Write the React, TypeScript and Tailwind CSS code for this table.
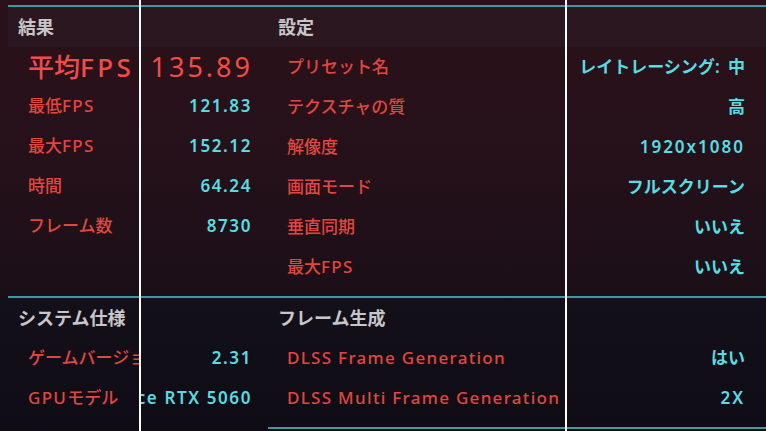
const results = [
  ["最低FPS", "121.83"],
  ["最大FPS", "152.12"],
  ["時間", "64.24"],
  ["フレーム数", "8730"],
];

const settings = [
  ["プリセット名", "レイトレーシング: 中"],
  ["テクスチャの質", "高"],
  ["解像度", "1920x1080"],
  ["画面モード", "フルスクリーン"],
  ["垂直同期", "いいえ"],
  ["最大FPS", "いいえ"],
];

const system = [
  ["ゲームバージョン", "2.31"],
  ["GPUモデル", "GeForce RTX 5060"],
  ["GPUメモリ", "8151 MB"],
];

const frameGen = [
  ["DLSS Frame Generation", "はい"],
  ["DLSS Multi Frame Generation", "2X"],
];

// latin runs in the game font are spaced wider than the kana
const Txt = ({ s, wide }: { s: string; wide?: boolean }) => (
  <>
    {s.split(/([\x20-\x7e]+)/).map((p, i) =>
      /[\x20-\x7e]/.test(p) ? (
        <span key={i} className={wide ? "tracking-[2px]" : "tracking-[1.3px]"}>
          {p}
        </span>
      ) : (
        p
      )
    )}
  </>
);

const LeftRow = ({ label, value }: { label: string; value: string }) => (
  <div className="grid grid-cols-[111px_113px] h-[40px] items-center pl-[20px] text-[17px] font-medium">
    <div className="overflow-hidden whitespace-nowrap text-[#e2463f]">
      <Txt s={label} />
    </div>
    <div className="flex justify-end overflow-hidden whitespace-nowrap font-semibold text-[#55dde3]">
      <span className="tracking-[1.6px]">{value}</span>
    </div>
  </div>
);

const MidRow = ({ label, value }: { label: string; value: string }) => (
  <div className="flex h-[40px] items-center justify-between pl-[19px] pr-[21px] text-[17px] font-medium whitespace-nowrap">
    <span className="text-[#e2463f]">
      <Txt s={label} />
    </span>
    <span className="font-semibold text-[#55dde3]">
      <Txt s={value} wide />
    </span>
  </div>
);

const Header = ({ left, right }: { left: string; right: string }) => (
  <div className="grid grid-cols-[260px_1fr] h-[40px] items-center text-[18px] font-bold text-[#c8c6c8]">
    <div className="pl-[10px]">{left}</div>
    <div className="pl-[10px]">{right}</div>
  </div>
);

export default function App() {
  return (
    <div className="relative w-[766px] h-[431px] overflow-hidden bg-[#100d17] font-['Noto_Sans','Noto_Sans_CJK_JP',sans-serif]">
      {/* 結果 / 設定 */}
      <section className="h-[296px] pt-[5px] pl-[8px] bg-gradient-to-b from-[#2b1119] via-[#26111a] to-[#1b0f17]">
        <div className="h-[2px] bg-[#3a9ca2]" />
        <div className="bg-[#2a1920]/80">
          <Header left="結果" right="設定" />
        </div>
        <div className="grid grid-cols-[260px_1fr]">
          <div>
            <div className="grid grid-cols-[111px_114px] h-[39px] items-center pl-[20px] whitespace-nowrap">
              <div className="text-[26px] font-medium text-[#f44b48]">
                平均<span className="tracking-[3.5px]">FPS</span>
              </div>
              <div className="flex justify-end text-[27px] text-[#f44b48] tracking-[3px]">135.89</div>
            </div>
            {results.map(([l, v]) => (
              <LeftRow key={l} label={l} value={v} />
            ))}
          </div>
          <div>
            {settings.map(([l, v]) => (
              <MidRow key={l} label={l} value={v} />
            ))}
          </div>
        </div>
      </section>

      {/* システム仕様 / フレーム生成 */}
      <section className="h-[135px] pl-[8px] bg-gradient-to-b from-[#141019] to-[#0f0c16]">
        <div className="h-[2px] bg-[#3a9ca2]" />
        <Header left="システム仕様" right="フレーム生成" />
        <div className="grid grid-cols-[260px_1fr]">
          <div>
            {system.map(([l, v]) => (
              <LeftRow key={l} label={l} value={v} />
            ))}
          </div>
          <div>
            {frameGen.map(([l, v]) => (
              <MidRow key={l} label={l} value={v} />
            ))}
            <div className="mt-[9px] h-[2px] bg-[#3a9ca2]" />
          </div>
        </div>
      </section>

      {/* overlay dividers */}
      <div className="absolute top-0 bottom-0 left-[139px] w-[2px] bg-white" />
      <div className="absolute top-0 bottom-0 left-[565px] w-[2px] bg-white" />
    </div>
  );
}
